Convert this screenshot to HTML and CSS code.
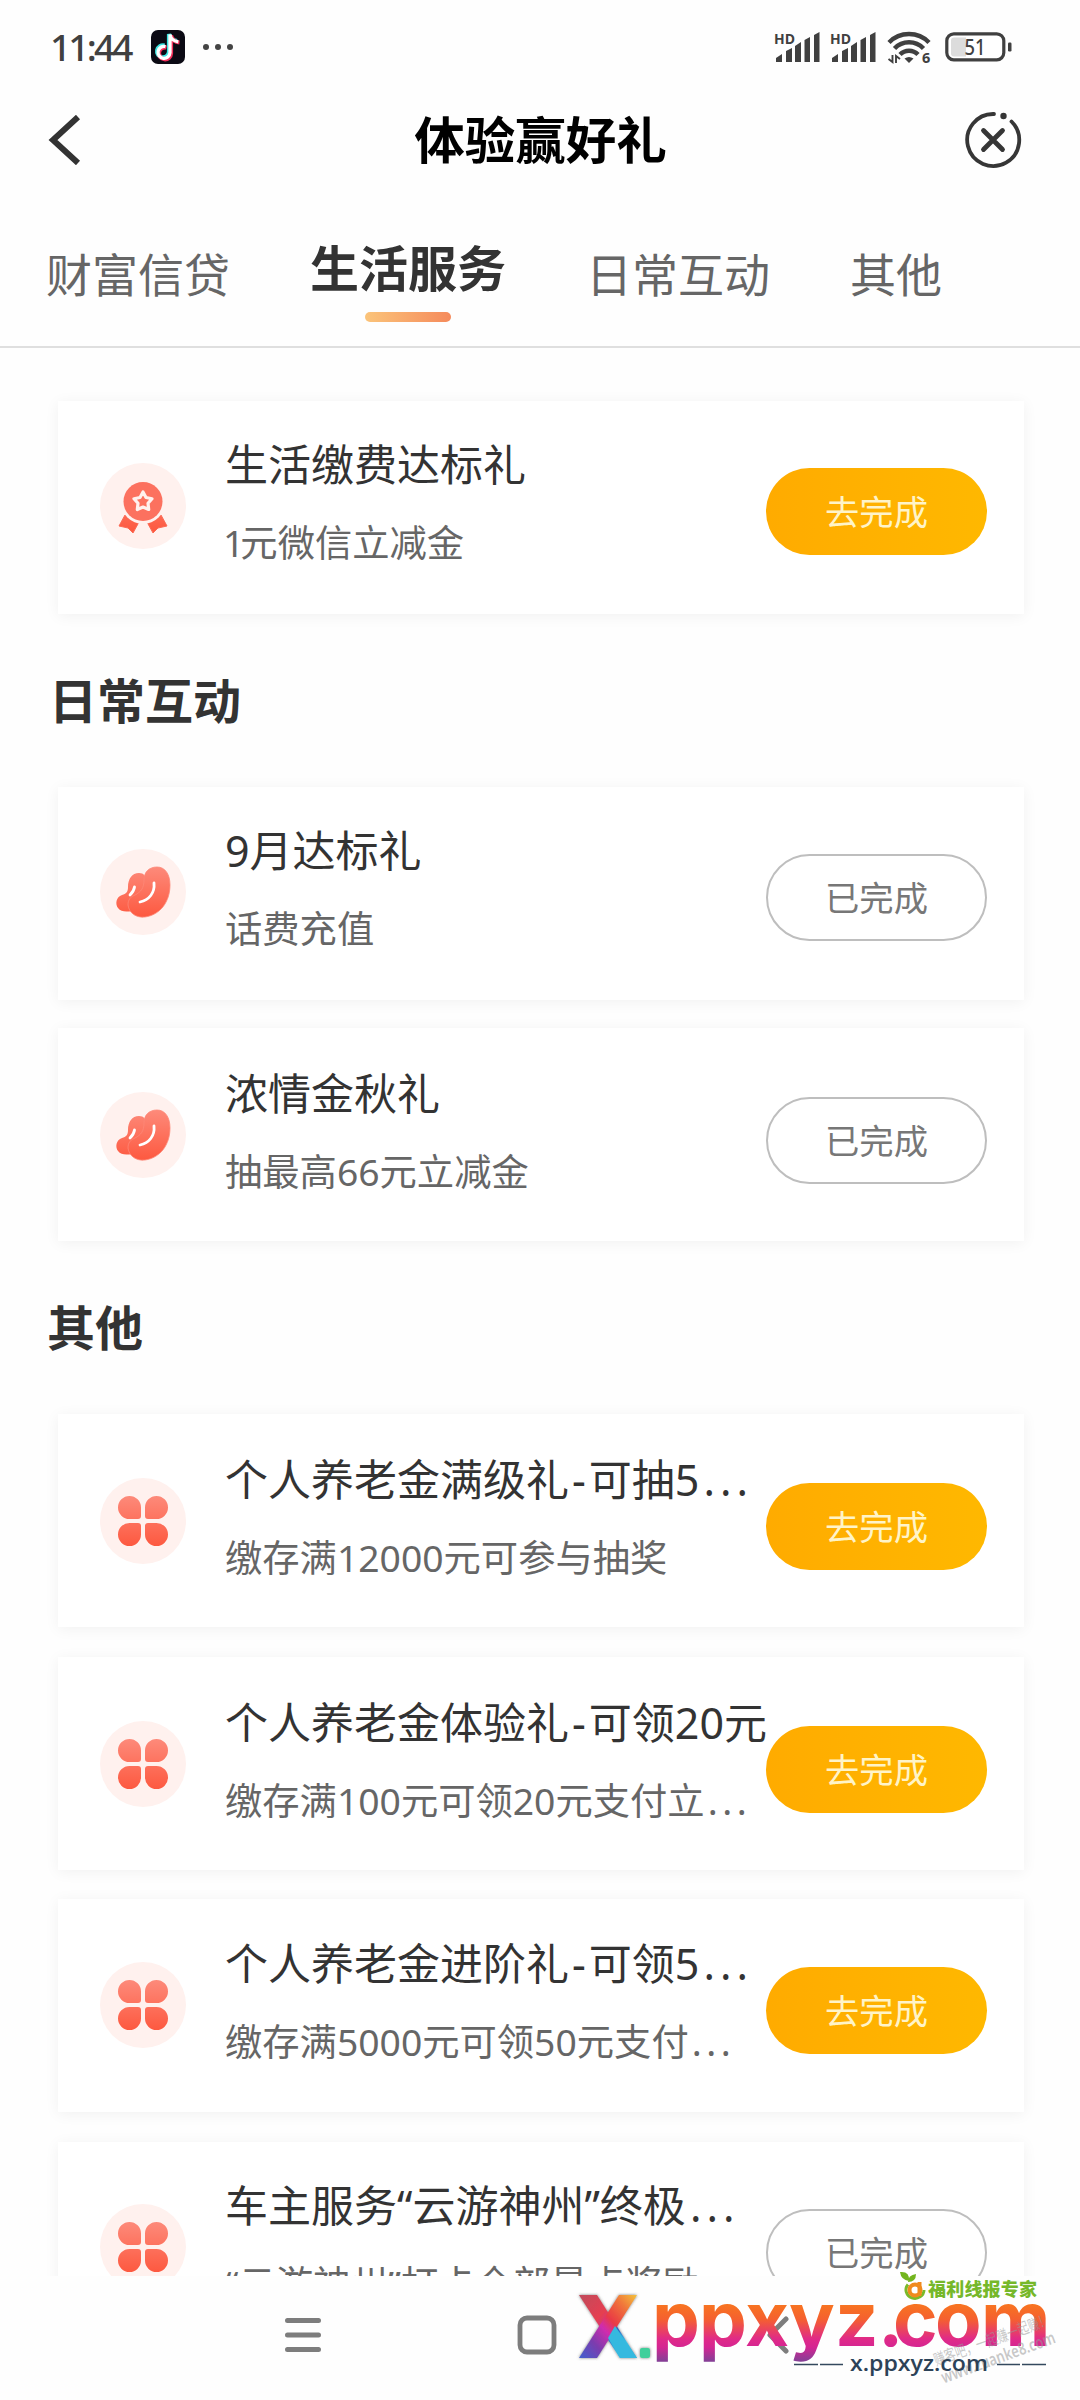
FILE: index.html
```html
<!DOCTYPE html>
<html lang="zh-CN">
<head>
<meta charset="utf-8">
<title>体验赢好礼</title>
<link rel="stylesheet" href="styles.css">
</head>
<body>
<svg class="defs" width="0" height="0" aria-hidden="true">
  <defs>
    <linearGradient id="coralAll" gradientUnits="userSpaceOnUse" x1="0" y1="18" x2="0" y2="68">
      <stop offset="0" stop-color="#fd8a7a"/><stop offset="1" stop-color="#fd5940"/>
    </linearGradient>
    <symbol id="medal" viewBox="0 0 86 86">
      <circle cx="43" cy="43" r="43" fill="#fff1ee"/>
      <path d="M25 52 39 59 33 70 28 65 19 63Z M61 52 47 59 53 70 58 65 67 63Z" fill="url(#coralAll)" stroke="#fc6a55" stroke-width="1" stroke-linejoin="round"/>
      <circle cx="43" cy="39" r="22" fill="#fff1ee"/>
      <circle cx="43" cy="38.500" r="19.500" fill="#fc715f"/>
      <path d="M43 29 46 34.500 52 35.700 48 40.300 48.700 46.500 43 44 37.300 46.500 38 40.300 34 35.700 40 34.500Z" fill="#fc715f" stroke="#fff1ee" stroke-width="3.200" stroke-linejoin="round"/>
    </symbol>
    <symbol id="beans" viewBox="0 0 86 86">
      <circle cx="43" cy="43" r="43" fill="#fff1ee"/>
      <path d="M39 24C32 24 28 30 28 38 28 43 26 45 22 46 16 48 15 55 18 59 21 63 26 63 32 62 44 59 48 48 47 34 46 27 44 24 39 24Z" fill="url(#coralAll)"/>
      <path d="M57 18C49 18 44 23 44 31 44 39 41 43 35 46 30 48 28 51 28 56 29 64 36 69 45 68 60 66 70 53 70 36 70 25 65 18 57 18Z" fill="url(#coralAll)" stroke="#fd8877" stroke-width=".8"/>
      <path d="M54 34C55 44 49 51 40 53M34.500 38C34 42 32 44 30 46" fill="none" stroke="#fff" stroke-width="2.800" stroke-linecap="round"/>
    </symbol>
    <symbol id="clover" viewBox="0 0 86 86">
      <circle cx="43" cy="43" r="43" fill="#fff1ee"/>
      <path d="M29.500 18A11.500 11.500 0 0 1 41 29.500V38Q41 41 38 41H29.500A11.500 11.500 0 0 1 29.500 18ZM56.500 18A11.500 11.500 0 0 0 45 29.500V38Q45 41 48 41H56.500A11.500 11.500 0 0 0 56.500 18ZM29.500 68A11.500 11.500 0 0 0 41 56.500V48Q41 45 38 45H29.500A11.500 11.500 0 0 0 29.500 68ZM56.500 68A11.500 11.500 0 0 1 45 56.500V48Q45 45 48 45H56.500A11.500 11.500 0 0 1 56.500 68Z" fill="url(#coralAll)"/>
    </symbol>
    <symbol id="signal" viewBox="0 0 48 32">
      <path d="M3 31V27L9 23V31ZM13 31V20L19 17V31ZM22 31V15L28 11V31ZM31.500 31V9L37 6V31ZM41 31V4L46.500 1V31Z" fill="#404040"/>
      <text x="1" y="12.500" font-family="Open Sans, Liberation Sans, sans-serif" font-weight="700" font-size="14.500" fill="#404040" textLength="21" lengthAdjust="spacingAndGlyphs">HD</text>
    </symbol>
  </defs>
</svg>

<div class="screen">
  <header class="status">
    <span class="status__time">11:44</span>
    <svg class="status__app" width="34" height="34" viewBox="0 0 34 34">
      <rect width="34" height="34" rx="7" fill="#0b0a14"/>
      <g fill="none" stroke-width="4.200">
        <path d="M13.500 15.500A6 6 0 1 0 18 22V4C19 8 21 10 26 11" stroke="#3be4e0"/>
        <path d="M15.500 17.500A6 6 0 1 0 20 23.500V5.500C21 9 23 12 28.500 12.500" stroke="#f4315c"/>
        <path d="M14.500 16.500A6 6 0 1 0 19 22.700V4.500C20 9 22 11 27.300 11.800" stroke="#fff" stroke-width="3.300"/>
      </g>
    </svg>
    <svg class="status__dots" width="32" height="8" viewBox="0 0 32 8"><g fill="#444"><circle cx="4" cy="4" r="3"/><circle cx="16" cy="4" r="3"/><circle cx="28" cy="4" r="3"/></g></svg>
    <div class="status__right">
      <svg width="48" height="32"><use href="#signal"/></svg>
      <svg class="status__sig2" width="48" height="32"><use href="#signal"/></svg>
      <svg class="status__wifi" width="44" height="34" viewBox="0 0 44 34">
        <g fill="none" stroke="#404040" stroke-width="4.500">
          <path d="M2 12.500A28 28 0 0 1 42 12.500"/>
          <path d="M7.500 18.500A20 20 0 0 1 36.500 18.500"/>
          <path d="M13 24.500A12.500 12.500 0 0 1 31 24.500"/>
        </g>
        <path d="M17.500 28.500Q22 25.500 26.500 28.500L22 33Z" fill="#404040"/>
        <path d="M5.500 25V32L1.500 29M9 33V26L13 29" fill="none" stroke="#404040" stroke-width="1.900"/>
        <text x="35" y="32.500" font-family="Open Sans, sans-serif" font-weight="700" font-size="14.500" fill="#404040">6</text>
      </svg>
      <svg class="status__battery" width="67" height="30" viewBox="0 0 67 30">
        <rect x="1.800" y="1.800" width="57" height="26" rx="7" fill="#fff" stroke="#404040" stroke-width="3.200"/>
        <path d="M9 5.500H21V24.500H9Q6 24.500 6 21.500V8.500Q6 5.500 9 5.500Z" fill="#dcdcdc"/>
        <rect x="63" y="10.500" width="3.500" height="9" rx="1.200" fill="#404040"/>
        <text x="30" y="22.500" text-anchor="middle" font-family="Noto Sans, sans-serif" font-weight="500" font-size="22" fill="#404040" textLength="21" lengthAdjust="spacingAndGlyphs">51</text>
      </svg>
    </div>
  </header>

  <div class="titlebar">
    <svg width="34" height="50" viewBox="0 0 34 50"><path d="M31 2 6 25 31 48" fill="none" stroke="#333" stroke-width="6"/></svg>
    <h1 class="titlebar__title">体验赢好礼</h1>
    <svg class="titlebar__close" width="58" height="58" viewBox="0 0 58 58">
      <path d="M30 3A26 26 0 1 0 47.500 10.500" fill="none" stroke="#363636" stroke-width="3.800" stroke-linecap="round"/>
      <circle cx="39.500" cy="5" r="3.200" fill="#363636"/>
      <path d="M19.500 19.500 38.500 38.500M38.500 19.500 19.500 38.500" stroke="#363636" stroke-width="4.800" stroke-linecap="round"/>
    </svg>
  </div>

  <nav class="tabs">
    <a class="tab">财富信贷</a>
    <a class="tab tab--active">生活服务</a>
    <a class="tab">日常互动</a>
    <a class="tab">其他</a>
  </nav>

  <main class="list">
    <section class="group">
      <article class="card">
        <svg class="card__icon"><use href="#medal"/></svg>
        <div class="card__text"><h3>生活缴费达标礼</h3><p><span class="one">1</span>元微信立减金</p></div>
        <button class="btn btn--go">去完成</button>
      </article>
    </section>

    <h2 class="heading heading--daily">日常互动</h2>
    <section class="group">
      <article class="card">
        <svg class="card__icon"><use href="#beans"/></svg>
        <div class="card__text"><h3>9月达标礼</h3><p>话费充值</p></div>
        <button class="btn btn--done">已完成</button>
      </article>
      <article class="card card--low">
        <svg class="card__icon"><use href="#beans"/></svg>
        <div class="card__text"><h3>浓情金秋礼</h3><p>抽最高66元立减金</p></div>
        <button class="btn btn--done">已完成</button>
      </article>
    </section>

    <h2 class="heading">其他</h2>
    <section class="group group--wide">
      <article class="card card--low">
        <svg class="card__icon"><use href="#clover"/></svg>
        <div class="card__text"><h3>个人养老金满级礼<i>-</i>可抽5<span class="dots">...</span></h3><p>缴存满12000元可参与抽奖</p></div>
        <button class="btn btn--go">去完成</button>
      </article>
      <article class="card card--low">
        <svg class="card__icon"><use href="#clover"/></svg>
        <div class="card__text"><h3>个人养老金体验礼<i>-</i>可领20元</h3><p>缴存满100元可领20元支付立<span class="dots">...</span></p></div>
        <button class="btn btn--go">去完成</button>
      </article>
      <article class="card card--mid">
        <svg class="card__icon"><use href="#clover"/></svg>
        <div class="card__text"><h3>个人养老金进阶礼<i>-</i>可领5<span class="dots">...</span></h3><p>缴存满5000元可领50元支付<span class="dots">...</span></p></div>
        <button class="btn btn--go">去完成</button>
      </article>
      <article class="card">
        <svg class="card__icon"><use href="#clover"/></svg>
        <div class="card__text"><h3>车主服务“云游神州”终极<span class="dots">...</span></h3><p>“云游神州”打卡全部景点奖励</p></div>
        <button class="btn btn--done">已完成</button>
      </article>
    </section>
  </main>

  <footer class="navbar">
    <svg width="38" height="38" viewBox="0 0 38 38"><path d="M3.500 4.500H34.500M3.500 19H34.500M3.500 33.500H34.500" stroke="#7d7d7d" stroke-width="5" stroke-linecap="round"/></svg>
    <svg width="40" height="40" viewBox="0 0 40 40"><rect x="3" y="3" width="34" height="34" rx="7" fill="none" stroke="#7d7d7d" stroke-width="4.800"/></svg>
    <svg width="22" height="40" viewBox="0 0 22 40"><path d="M19 4 3 20 19 36" fill="none" stroke="#7d7d7d" stroke-width="5" stroke-linecap="round" stroke-linejoin="round"/></svg>
  </footer>

  <svg class="watermark" width="510" height="130" viewBox="570 2270 510 130">
    <defs>
      <linearGradient id="sunset" gradientUnits="userSpaceOnUse" x1="0" y1="2303" x2="0" y2="2361">
        <stop offset="0" stop-color="#f8761f"/><stop offset=".28" stop-color="#f5602f"/><stop offset=".62" stop-color="#e02a88"/><stop offset=".76" stop-color="#d52592"/><stop offset="1" stop-color="#853f96"/>
      </linearGradient>
      <linearGradient id="xa" x1="0" y1="0" x2="1" y2="1"><stop offset="0" stop-color="#c04a5c"/><stop offset=".35" stop-color="#e63f50"/><stop offset=".52" stop-color="#c22f9c"/><stop offset=".6" stop-color="#2b5fc4"/><stop offset=".78" stop-color="#39c4e8"/><stop offset="1" stop-color="#36a9d6"/></linearGradient>
      <linearGradient id="xb" x1="1" y1="0" x2="0" y2="1"><stop offset="0" stop-color="#f3c33c"/><stop offset=".2" stop-color="#f0763a"/><stop offset=".42" stop-color="#e93a45"/><stop offset=".55" stop-color="#d02cae"/><stop offset=".75" stop-color="#7b3cae"/><stop offset="1" stop-color="#3f60cf"/></linearGradient>
      <filter id="soft" x="-20%" y="-20%" width="140%" height="140%"><feDropShadow dx="0" dy="0" stdDeviation="1.800" flood-color="#555" flood-opacity=".8"/></filter>
    </defs>
    <g filter="url(#soft)">
      <path d="M579 2295H597L637 2358H620Z" fill="url(#xa)"/>
      <path d="M637 2295H619L579 2358H597Z" fill="url(#xb)"/>
      <path d="M615 2326 637 2358H620L608 2338Z" fill="#35b9df"/>
      <rect x="640" y="2348" width="10" height="10" rx="2" fill="#41cf9b"/>
    </g>
    <g font-family="Inter, Open Sans, sans-serif" font-weight="700" font-size="76" fill="url(#sunset)">
      <text y="2346" x="652 699 745 789 835 878 893 935 981">ppxyz.com</text>
    </g>
    <g transform="rotate(-20 1000 2345)" font-family="Noto Sans, Noto Sans CJK SC, sans-serif" fill="#999" fill-opacity=".55">
      <text x="933" y="2343" font-size="16" textLength="122" lengthAdjust="spacingAndGlyphs">赚客吧，一起赚一起赚！</text>
      <text x="934" y="2362" font-size="17" font-weight="600" textLength="120" lengthAdjust="spacingAndGlyphs">www.zuanke8.com</text>
    </g>
    <path d="M794 2364.500H818M820 2364.500H843M997 2364.500H1020M1022 2364.500H1046" stroke="#34495e" stroke-width="1.500"/>
    <text x="850" y="2371" font-family="Open Sans, Noto Sans, sans-serif" font-weight="600" font-size="22" fill="#2c4257" textLength="138" lengthAdjust="spacingAndGlyphs">x.ppxyz.com</text>
    <path d="M908 2284.500A9 8.500 0 1 0 924 2290" fill="none" stroke="#7ab929" stroke-width="3"/>
    <circle cx="915" cy="2290" r="5.500" fill="#fff" stroke="#f08a1c" stroke-width="4"/>
    <path d="M919.500 2282V2296" stroke="#f08a1c" stroke-width="4"/>
    <path d="M900 2272Q910 2271 909 2281Q901 2280 900 2272ZM908 2282Q908 2275 916 2274Q916 2282 908 2282Z" fill="#73b51f"/>
    <text x="928" y="2295.500" font-family="Noto Sans CJK SC, sans-serif" font-weight="900" font-size="18" fill="#76b82a" textLength="109">福利线报专家</text>
  </svg>
</div>
</body>
</html>
```

FILE: styles.css
```css
* { box-sizing: border-box; }

body {
  margin: 0;
  background: #fefefe;
  font-family: "Noto Sans", "Noto Sans CJK SC", sans-serif;
  color: #333;
}

h1, h2, h3, p { margin: 0; }

.defs { display: block; }

.screen {
  position: relative;
  display: flex;
  flex-direction: column;
  width: 1080px;
  height: 2400px;
  overflow: hidden;
}

/* Status bar */
.status {
  display: flex;
  align-items: center;
  height: 93px;
  padding: 0 69px 0 50px;
  flex: none;
}
.status svg { overflow: visible; }
.status__time {
  width: 101px;
  font-size: 37px;
  font-weight: 500;
  letter-spacing: -2.8px;
  color: #404040;
}
.status__dots { margin-left: 17px; }
.status__right { display: flex; align-items: center; margin-left: auto; }
.status__sig2 { margin-left: 8px; }
.status__wifi { margin-left: 10px; }
.status__battery { margin-left: 14px; margin-right: -1px; }

/* Title bar */
.titlebar {
  display: grid;
  grid-template-columns: 1fr auto 1fr;
  align-items: center;
  height: 94px;
  margin-bottom: 2px;
  padding: 0 58px 0 47px;
  flex: none;
}
.titlebar__title {
  padding-left: 12px;
  font-size: 50.5px;
  line-height: 70px;
  font-weight: 700;
  color: #000;
}
.titlebar__close { justify-self: end; }

/* Category tabs */
.tabs {
  display: flex;
  gap: 80px;
  height: 159px;
  padding: 55px 0 0 46px;
  border-bottom: 2px solid #dfdfdf;
  flex: none;
}
.tab {
  font-size: 46px;
  line-height: 60px;
  font-weight: 400;
  color: #666;
}
.tab--active {
  display: flex;
  flex-direction: column;
  align-items: center;
  margin-top: -6px;
  font-size: 49px;
  font-weight: 700;
  color: #333;
}
.tab--active::after {
  content: "";
  width: 86px;
  height: 10px;
  margin-top: 14px;
  border-radius: 5px;
  background: linear-gradient(90deg, #fbc47a, #f58a5b);
}

/* Reward list */
.list {
  height: 1928px;
  padding: 53px 56px 0 58px;
  overflow: hidden;
  flex: none;
}
.group { display: flex; flex-direction: column; gap: 28px; }
.group--wide { gap: 29.500px; }

.heading {
  margin: 57px 0 56px -11px;
  font-size: 48px;
  line-height: 60px;
  font-weight: 700;
}
.heading--daily { margin-left: -9px; }

.card {
  display: flex;
  align-items: flex-start;
  height: 213px;
  padding: 34px 37px 0 42px;
  background: #fff;
  box-shadow: 0 2px 14px rgba(0, 0, 0, .055);
}
.card--mid { padding-top: 35px; }
.card--low { padding-top: 36px; }
.card__icon { width: 86px; height: 86px; margin-top: 28px; flex: none; }
.card__text {
  width: 541px;
  margin-left: 39px;
  white-space: nowrap;
  flex: none;
}
.card__text h3 {
  font-size: 43px;
  line-height: 60px;
  font-weight: 400;
}
.card__text h3 i { font-style: normal; padding: 0 3px; }
.card__text p {
  margin-top: 23px;
  font-size: 37.300px;
  line-height: 50px;
  font-weight: 400;
  color: #666;
}
.one { letter-spacing: -4px; margin-left: -2px; }
.dots { letter-spacing: 5px; padding-left: 4px; }
p .dots { padding-left: 3px; letter-spacing: 4.500px; }

.btn {
  width: 221px;
  height: 87px;
  margin-top: 33px;
  padding: 0;
  border: 0;
  border-radius: 44px;
  font: 400 34.300px/87px "Noto Sans", "Noto Sans CJK SC", sans-serif;
  text-align: center;
  flex: none;
}
.btn--go { background: linear-gradient(90deg, #ffab00, #ffb800); color: #fff4c8; }
.btn--done { border: 2px solid #bebebe; background: #fff; color: #777; line-height: 83px; }

/* System navigation */
.navbar {
  display: grid;
  grid-template-columns: 38px 40px 22px;
  column-gap: 195px;
  align-items: center;
  height: 118px;
  padding-left: 284px;
}
.navbar svg:last-child { margin-left: 15px; }

.watermark {
  position: absolute;
  left: 570px;
  top: 2270px;
}
```
